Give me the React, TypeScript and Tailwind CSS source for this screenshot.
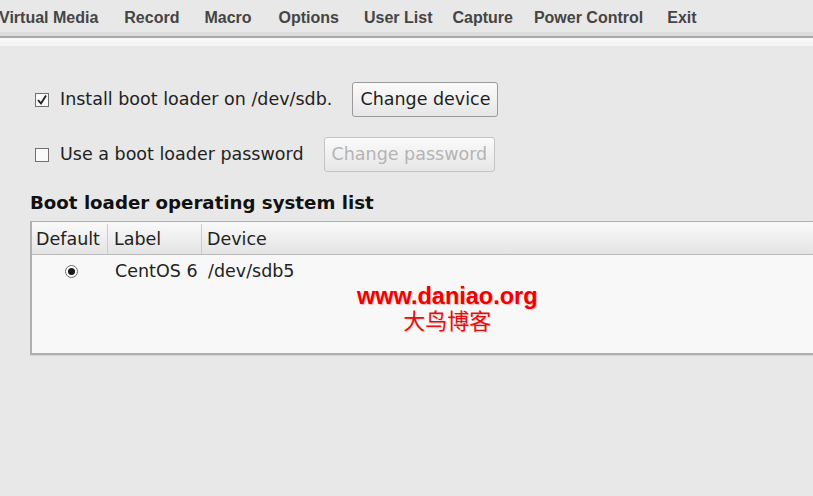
import React from 'react';

const menu = [
  { label: 'Virtual Media', ml: 'ml-[-1px]' },
  { label: 'Record', ml: 'ml-[26px]' },
  { label: 'Macro', ml: 'ml-[25px]' },
  { label: 'Options', ml: 'ml-[27px]' },
  { label: 'User List', ml: 'ml-[25px]' },
  { label: 'Capture', ml: 'ml-[20px]' },
  { label: 'Power Control', ml: 'ml-[21px]' },
  { label: 'Exit', ml: 'ml-[24px]' },
];

const Checkbox = ({ checked }: { checked?: boolean }) => (
  <div className="w-[14px] h-[14px] border border-[#707070] bg-[#fafafa] flex items-center justify-center shrink-0">
    {checked && (
      <svg width="12" height="12" viewBox="0 0 12 12">
        <path d="M2 6 L5 9.5 L10 1.5" fill="none" stroke="#222" strokeWidth="1.9" />
      </svg>
    )}
  </div>
);

const Button = ({ children, disabled }: { children: React.ReactNode; disabled?: boolean }) => (
  <div
    className={`h-[35px] px-[7px] flex items-center rounded-[3px] border bg-gradient-to-b from-[#fbfbfb] to-[#e6e6e6] ${
      disabled ? 'border-[#c4c4c4] text-[#b4b4b4]' : 'border-[#9a9a9a] text-[#1e1e1e]'
    }`}
  >
    {children}
  </div>
);

export default function App() {
  return (
    <div className="relative w-[813px] h-[496px] overflow-hidden bg-[#e8e8e8] font-['DejaVu_Sans',sans-serif] text-[#222]">
      {/* Menu bar */}
      <div className="h-[32px] flex items-center pt-[3px] font-['Liberation_Sans',Arial,sans-serif] font-bold text-[16px] text-[#454545] whitespace-nowrap">
        {menu.map((m) => (
          <span key={m.label} className={m.ml}>
            {m.label}
          </span>
        ))}
      </div>
      <div className="h-[4px] bg-[#dcdcdc]" />
      <div className="h-[2px] bg-[#a8a8a8]" />
      <div className="h-[8px] bg-gradient-to-b from-[#fafafa] to-[#f2f2f2]" />

      {/* Content */}
      <div className="pl-[30px] pt-[36px] text-[17.5px]">
        <div className="flex items-center h-[35px] pl-[5px]">
          <Checkbox checked />
          <span className="ml-[11px]">Install boot loader on /dev/sdb.</span>
          <div className="ml-[20px]">
            <Button>Change device</Button>
          </div>
        </div>

        <div className="flex items-center h-[35px] pl-[5px] mt-[20px]">
          <Checkbox />
          <span className="ml-[11px]">Use a boot loader password</span>
          <div className="ml-[20px]">
            <Button disabled>Change password</Button>
          </div>
        </div>

        <div className="mt-[20px] font-bold text-[18.2px] leading-[22px] text-[#111]">
          Boot loader operating system list
        </div>

        {/* Table */}
        <div className="mt-[7px] w-[800px] h-[134px] border-l-2 border-t border-b-2 border-[#b0b0b0] bg-[#f8f8f8] shadow-[0_1px_0_#d4d4d4]">
          <div className="h-[33px] pt-[2px] flex items-center bg-gradient-to-b from-[#f9f9f9] via-[#efefef] to-[#e3e3e3] border-b border-[#bcbcbc]">
            <div className="w-[76px] pl-[4px] h-full flex items-center border-r border-[#cbcbcb]">Default</div>
            <div className="w-[94px] pl-[6px] h-full flex items-center border-r border-[#cbcbcb]">Label</div>
            <div className="pl-[5px]">Device</div>
          </div>
          <div className="h-[30px] pt-[2px] flex items-center">
            <div className="w-[76px] flex justify-center">
              <div className="w-[13px] h-[13px] rounded-full border border-[#6a6a6a] bg-white flex items-center justify-center ml-[3px]">
                <div className="w-[7px] h-[7px] rounded-full bg-[#1a1a1a]" />
              </div>
            </div>
            <div className="w-[94px] pl-[7px]">CentOS 6</div>
            <div className="pl-[6px]">/dev/sdb5</div>
          </div>
        </div>
      </div>

      {/* Watermark overlay */}
      <div className="absolute left-[357px] top-[283px] flex flex-col items-center">
        <div className="font-['Liberation_Sans',Arial,sans-serif] font-bold text-[23.5px] leading-[26px] text-[#f00000] [text-shadow:1px_1px_1px_#e8b0b0]">
          www.daniao.org
        </div>
        <div className="font-['Liberation_Serif','Noto_Sans_CJK_SC',serif] text-[22px] leading-[26px] text-[#e01010] [text-shadow:1px_1px_1px_#e8c0c0]">
          大鸟博客
        </div>
      </div>
    </div>
  );
}
